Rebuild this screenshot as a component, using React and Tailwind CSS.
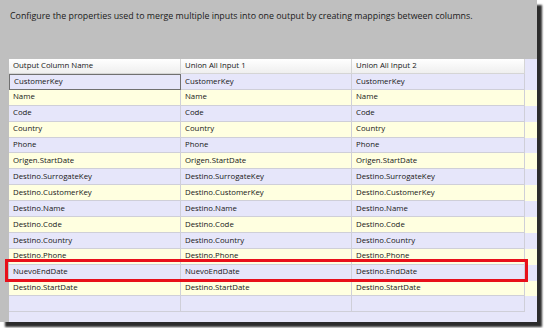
const rows = [
    ['CustomerKey', 'CustomerKey', 'CustomerKey'],
    ['Name', 'Name', 'Name'],
    ['Code', 'Code', 'Code'],
    ['Country', 'Country', 'Country'],
    ['Phone', 'Phone', 'Phone'],
    ['Origen.StartDate', 'Origen.StartDate', 'Origen.StartDate'],
    ['Destino.SurrogateKey', 'Destino.SurrogateKey', 'Destino.SurrogateKey'],
    ['Destino.CustomerKey', 'Destino.CustomerKey', 'Destino.CustomerKey'],
    ['Destino.Name', 'Destino.Name', 'Destino.Name'],
    ['Destino.Code', 'Destino.Code', 'Destino.Code'],
    ['Destino.Country', 'Destino.Country', 'Destino.Country'],
    ['Destino.Phone', 'Destino.Phone', 'Destino.Phone'],
    ['NuevoEndDate', 'NuevoEndDate', 'Destino.EndDate'],
    ['Destino.StartDate', 'Destino.StartDate', 'Destino.StartDate'],
    ['', '', ''],
]

const headers = ['Output Column Name', 'Union All Input 1', 'Union All Input 2']
const colWidths = ['w-[172px]', 'w-[171px]', 'w-[173px]']

export default function App() {
    return (
        <div className="w-[544px] h-[328px] bg-white overflow-hidden font-['Open_Sans',sans-serif] text-[#161616]">
            <div className="relative w-[537px] h-[322px] bg-[#bfbfbf] shadow-[5px_5px_2px_#2c2c2c] flex flex-col">
                <div className="h-[59px] pl-[10px] pt-[10px] text-[8.85px] leading-[12px] text-[#1a1a1a]">
                    Configure the properties used to merge multiple inputs into one output by creating mappings between columns.
                </div>

                <div className="ml-[9px] flex-1 bg-[#e6e6fa] flex flex-col text-[7.8px]">
                    {/* header */}
                    <div className="flex h-[15px]">
                        {headers.map((h, i) => (
                            <div
                                key={h}
                                className={`${colWidths[i]} flex items-center pl-[4px] bg-gradient-to-b from-white to-[#efefef] border-r border-b border-[#d5d5d5]`}
                            >
                                {h}
                            </div>
                        ))}
                    </div>

                    {rows.map((r, ri) => (
                        <div key={ri} className={`flex h-[15.9px] ${ri % 2 === 1 ? 'bg-[#ffffe0]' : 'bg-[#e6e6fa]'}`}>
                            {r.map((c, ci) => (
                                <div
                                    key={ci}
                                    className={`${colWidths[ci]} flex items-center pl-[4px] border-r border-b ${
                                        ri === 0 && ci === 0 ? 'border border-[#707070]' : 'border-[#cfcfd8]'
                                    }`}
                                >
                                    {c}
                                </div>
                            ))}
                        </div>
                    ))}
                </div>

                {/* red highlight */}
                <div className="absolute left-[5px] top-[259px] w-[523px] h-[23px] border-[3px] border-[#e8101a]" />
            </div>
        </div>
    )
}
